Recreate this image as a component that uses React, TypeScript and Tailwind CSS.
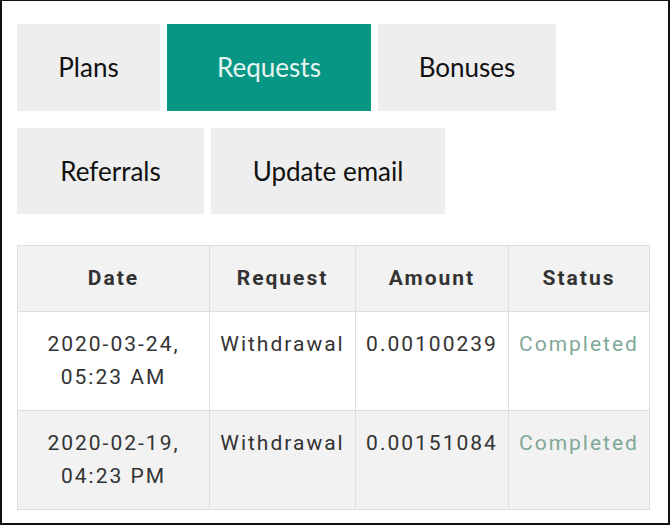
const tabs = [
  [
    { label: "Plans", w: "w-[143px]", active: false },
    { label: "Requests", w: "w-[204px]", active: true },
    { label: "Bonuses", w: "w-[178px]", active: false },
  ],
  [
    { label: "Referrals", w: "w-[187px]", active: false },
    { label: "Update email", w: "w-[234px]", active: false },
  ],
];

const rows = [
  { date: "2020-03-24,", time: "05:23 AM", request: "Withdrawal", amount: "0.00100239", status: "Completed" },
  { date: "2020-02-19,", time: "04:23 PM", request: "Withdrawal", amount: "0.00151084", status: "Completed" },
];

export default function App() {
  return (
    <div className="w-[670px] h-[526px] bg-white">
      <div className="h-[525px] border-t border-l-2 border-r-2 border-b-2 border-[#111] pl-[15px] pt-[23px]">
        <div className="flex flex-col gap-[17px] font-['Lato',sans-serif] text-[26px] text-[#111]">
          {tabs.map((row, i) => (
            <div key={i} className="flex gap-[7px]">
              {row.map((tab) => (
                <div
                  key={tab.label}
                  className={`${tab.w} ${i === 0 ? "h-[87px]" : "h-[86px]"} flex items-center justify-center ${
                    tab.active ? "bg-[#079684] text-[#e6f4f1]" : "bg-[#eeeeee]"
                  }`}>
                  {tab.label}
                </div>
              ))}
            </div>
          ))}
        </div>

        <table className="mt-[31px] w-[632px] table-fixed border-collapse font-['Roboto',sans-serif] text-[21px] leading-[33px] tracking-[2px] text-[#333]">
          <colgroup>
            <col className="w-[192px]" />
            <col className="w-[146px]" />
            <col className="w-[153px]" />
            <col className="w-[141px]" />
          </colgroup>
          <thead>
            <tr className="bg-[#f2f2f2]">
              {["Date", "Request", "Amount", "Status"].map((h) => (
                <th key={h} className="border border-[#dedede] py-[16px] font-bold text-center">
                  {h}
                </th>
              ))}
            </tr>
          </thead>
          <tbody>
            {rows.map((r, i) => (
              <tr key={i} className={i % 2 === 1 ? "bg-[#f2f2f2]" : "bg-white"}>
                <td className="border border-[#dedede] py-[16px] text-center align-top">
                  {r.date}
                  <br />
                  {r.time}
                </td>
                <td className="border border-[#dedede] py-[16px] text-center align-top">{r.request}</td>
                <td className="border border-[#dedede] py-[16px] text-center align-top">{r.amount}</td>
                <td className="border border-[#dedede] py-[16px] text-center align-top text-[#7ea897]">{r.status}</td>
              </tr>
            ))}
          </tbody>
        </table>
      </div>
    </div>
  );
}
